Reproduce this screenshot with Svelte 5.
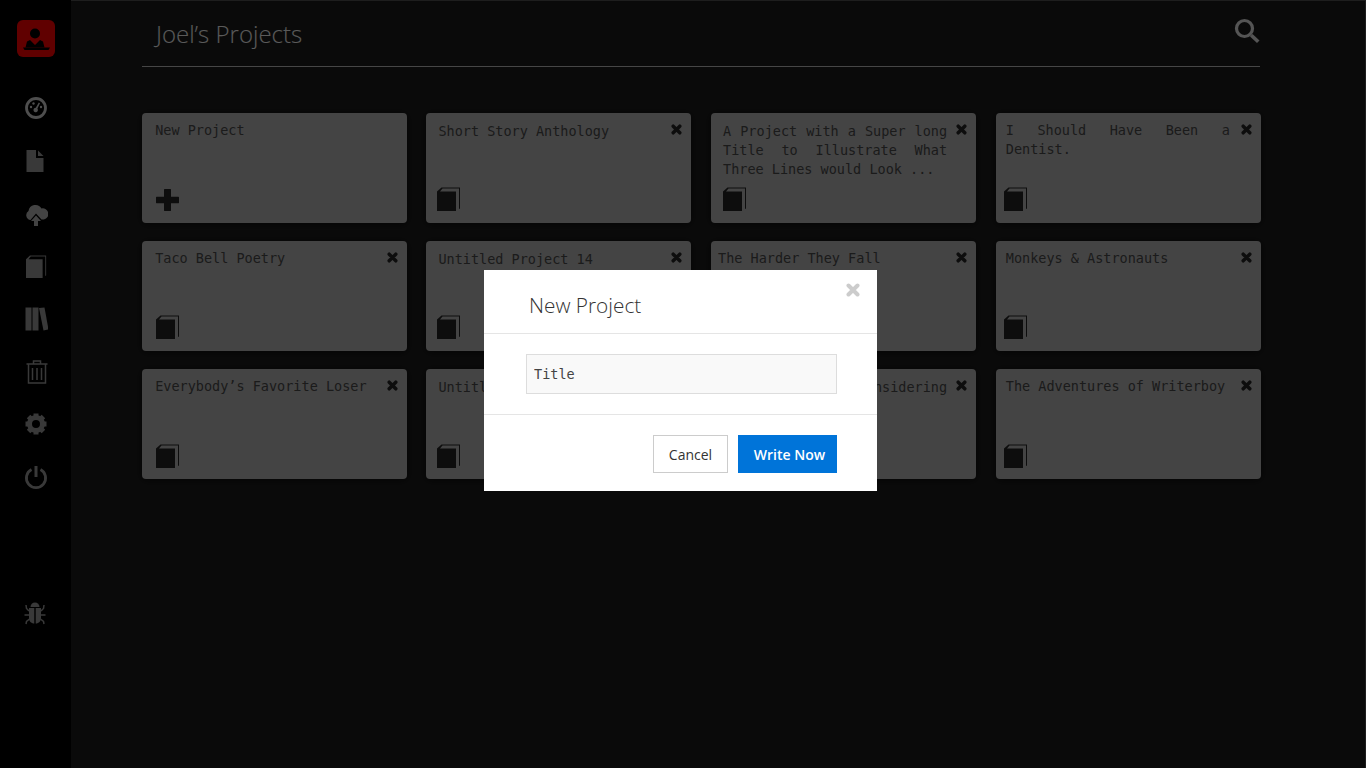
<script>
	const projects = [
		{ title: "New Project", isNew: true },
		{ title: "Short Story Anthology" },
		{ title: "A Project with a Super long Title to Illustrate What Three Lines would Look ..." },
		{ title: "I Should Have Been a Dentist." },
		{ title: "Taco Bell Poetry" },
		{ title: "Untitled Project 14" },
		{ title: "The Harder They Fall", nudge: "shifted" },
		{ title: "Monkeys & Astronauts" },
		{ title: "Everybody’s Favorite Loser" },
		{ title: "Untitled Project 15" },
		{ title: "The Book I Keep Considering", nudge: "inset" },
		{ title: "The Adventures of Writerboy" }
	];
</script>

{#snippet book()}
	<path d="M4.500 0.500H23V21.500L22 22V1.500H5.500L3 4.500H19V24H0V4.500Z" />
{/snippet}

<div class="app">
	<nav class="sidebar">
		<div class="logo">
			<svg width="30" height="28" viewBox="0 0 30 28">
				<circle cx="14" cy="8.500" r="5" />
				<path d="M9 15L14 20L19 15L22 16.500L23.500 22.500H4.500L6 16.500Z" />
				<path d="M2 22.500H29L27.500 25H3.500Z" />
			</svg>
		</div>
		<ul class="nav-icons">
			<li class="bright">
				<svg width="24" height="24" viewBox="0 0 24 24">
					<circle class="line" cx="12" cy="12" r="9.500" stroke-width="2.800" />
					<circle cx="7" cy="11" r="1.200" /><circle cx="9.500" cy="7.500" r="1.200" />
					<circle cx="17" cy="11" r="1.200" /><path d="M14.800 6.500L16 7.200L13.400 12.600A2.200 2.200 0 1 1 11.800 11.800Z" />
				</svg>
			</li>
			<li>
				<svg width="24" height="24" viewBox="0 0 24 24">
					<path d="M2.500 1H12V9H19.500V23H2.500Z" /><path d="M14 1.500L19.500 7H14Z" />
				</svg>
			</li>
			<li class="mid">
				<svg width="24" height="24" viewBox="0 0 24 24">
					<path d="M6 18A5 5 0 0 1 4.500 9A7 7 0 0 1 17.500 6.500A5.600 5.600 0 0 1 20 17.500H17.500L12 11.500L6.500 18Z" />
					<path d="M12 13.500L17 19H14V24.500H10V19H7Z" />
				</svg>
			</li>
			<li>
				<svg class="nav-book" width="21" height="23" viewBox="0 0 24 24" preserveAspectRatio="none">{@render book()}</svg>
			</li>
			<li>
				<svg width="24" height="24" viewBox="0 0 24 24">
					<rect x="1.500" y="0.500" width="6" height="23" /><rect x="8.500" y="0.500" width="6" height="23" />
					<path d="M15 1L20.500 0.500L24.500 22.500L19.500 23.500Z" />
				</svg>
			</li>
			<li>
				<svg width="24" height="24" viewBox="-1 0 24 24">
					<path class="line" stroke-width="1.500" d="M8.500 3.500V1H15.500V3.500M1.500 4H22.500M3.500 4V23H20.500V4M7.500 8V20M12 8V20M16.500 8V20" />
				</svg>
			</li>
			<li>
				<svg width="24" height="24" viewBox="0 0 24 24">
					<circle class="line" cx="12" cy="12" r="6.500" stroke-width="5" />
					{#each [0, 45, 90, 135, 180, 225, 270, 315] as angle}
						<rect x="9.500" y="1.500" width="5" height="5" transform="rotate({angle} 12 12)" />
					{/each}
				</svg>
			</li>
			<li>
				<svg width="24" height="24" viewBox="0 0 24 24">
					<path class="line" stroke-width="2.800" d="M7.500 4.500A9.600 9.600 0 1 0 16.500 4.500" />
					<rect x="10.500" y="1" width="3" height="11" />
				</svg>
			</li>
		</ul>
		<div class="bug">
			<svg width="24" height="24" viewBox="1 0 24 24">
				<path d="M7.500 6A4.500 4.500 0 0 1 16.500 6Z" />
				<path d="M6 7H11.300V22.500C8 22.500 6 20 6 17ZM12.700 7H18V17C18 20 16 22.500 12.700 22.500Z" />
				<path class="line" stroke-width="1.500" d="M6 10L3.500 7.500L3 4M18 10L20.500 7.500L21 4M6 14H1.500M18 14H22.500M6.500 18L3.500 20.500L3 23M17.500 18L20.500 20.500L21 23" />
			</svg>
		</div>
	</nav>

	<main class="content">
		<header class="page-head">
			<h1>Joel’s Projects</h1>
			<svg class="search" width="26" height="26" viewBox="0 0 26 26">
				<circle class="line" cx="10.500" cy="10.500" r="8" stroke-width="3.200" />
				<path d="M16 18.500L18.500 16L25.500 22.500L23 25Z" />
			</svg>
		</header>

		<div class="grid">
			{#each projects as project}
				<article class="card {project.nudge ?? ''}">
					{#if !project.isNew}
						<svg class="remove" width="11" height="11" viewBox="0 0 11 11">
							<path d="M2.200 2.200L8.800 8.800M8.800 2.200L2.200 8.800" />
						</svg>
					{/if}
					<p>{project.title}</p>
					{#if project.isNew}
						<svg class="plus" width="23" height="22" viewBox="0 0 23 23" preserveAspectRatio="none">
							<path d="M8 0.500Q8 0 8.500 0H14.500Q15 0 15 0.500V8H22.500Q23 8 23 8.500V14.500Q23 15 22.500 15H15V22.500Q15 23 14.500 23H8.500Q8 23 8 22.500V15H0.500Q0 15 0 14.500V8.500Q0 8 0.500 8H8Z" />
						</svg>
					{:else}
						<svg class="doc" width="24" height="24" viewBox="0 0 24 24">{@render book()}</svg>
					{/if}
				</article>
			{/each}
		</div>
	</main>
</div>

<div class="overlay">
	<div class="modal">
		<svg class="modal-close" width="14" height="14" viewBox="0 0 14 14">
			<path d="M2.500 2.500L11.500 11.500M11.500 2.500L2.500 11.500" />
		</svg>
		<h2>New Project</h2>
		<div class="modal-body">
			<input type="text" value="Title" />
		</div>
		<div class="modal-foot">
			<button class="cancel">Cancel</button>
			<button class="write">Write Now</button>
		</div>
	</div>
</div>

<style>
	:global(body) {
		background: #000;
	}
	.app {
		display: flex;
		height: 768px;
		overflow: hidden;
		background: #1b1b1b;
	}
	.sidebar {
		flex: 0 0 71px;
		background: #000;
		display: flex;
		flex-direction: column;
		align-items: center;
		padding-top: 20px;
		box-sizing: border-box;
		color: #8e8e8e;
	}
	.sidebar svg {
		fill: currentColor;
		display: block;
	}
	.line {
		fill: none !important;
		stroke: currentColor;
	}
	.logo {
		width: 38px;
		height: 37px;
		border-radius: 6px;
		background: #f00000;
		display: flex;
		align-items: center;
		justify-content: center;
	}
	.logo svg {
		color: #000;
	}
	.nav-icons {
		list-style: none;
		margin: 39px 0 0;
		padding: 0;
		display: flex;
		flex-direction: column;
		gap: 28.920px;
	}
	.nav-icons .bright {
		color: #c4c4c4;
	}
	.nav-icons .mid {
		color: #a8a8a8;
	}
	.nav-book {
		margin-left: 2.500px;
	}
	.bug {
		margin-top: 111.500px;
	}
	.content {
		flex: 1;
		min-width: 0;
		border-top: 1px solid #4b4b4b;
		border-right: 1px solid #4b4b4b;
		padding: 0 105px 0 71px;
	}
	.page-head {
		height: 65px;
		display: flex;
		align-items: center;
		justify-content: space-between;
		border-bottom: 1px solid #b0b0b0;
		padding: 0 0 0 14px;
	}
	.page-head h1 {
		margin: 0;
		font: 300 24px "Open Sans", sans-serif;
		color: #e0e0e0;
	}
	.search {
		fill: #d4d4d4;
		color: #d4d4d4;
		margin-bottom: 5px;
	}
	.grid {
		display: grid;
		grid-template-columns: repeat(4, 265px);
		column-gap: 19.700px;
		row-gap: 18px;
		margin: 46px 0 0 -0.300px;
		width: 1120px;
	}
	.card {
		position: relative;
		height: 110px;
		box-sizing: border-box;
		background: #aaa;
		border-radius: 4px;
		box-shadow: 0 1px 8px rgba(0, 0, 0, 0.6);
		padding: 9px 0 0 12px;
	}
	.card p {
		margin: 0;
		width: 224px;
		font: 13.500px/19px "DejaVu Sans Mono", monospace;
		color: #444;
		text-align: justify;
	}
	.card:nth-child(4n + 1) {
		padding-left: 13.500px;
		padding-top: 8px;
	}
	.card:nth-child(4n) {
		padding-left: 10px;
		padding-top: 8px;
	}
	.card.shifted {
		padding-left: 7px;
		padding-top: 8px;
	}
	.card.inset {
		padding-left: 16.500px;
	}
	.card svg {
		fill: #222;
	}
	.remove {
		position: absolute;
		top: 11px;
		right: 9px;
	}
	.remove path {
		fill: none;
		stroke: #222;
		stroke-width: 3.500;
		stroke-linecap: round;
	}
	.plus,
	.doc {
		position: absolute;
		bottom: 12px;
		left: 14px;
	}
	.card:nth-child(n + 9) .doc {
		bottom: 11px;
	}
	.card:nth-child(4n + 2) .doc {
		left: 11px;
	}
	.card:nth-child(4n + 3) .doc {
		left: 12px;
	}
	.card:nth-child(4n) .doc {
		left: 8px;
	}
	.overlay {
		position: fixed;
		inset: 0;
		background: rgba(0, 0, 0, 0.6);
		display: flex;
		justify-content: center;
		align-items: flex-start;
		padding: 270px 5px 0 0;
		box-sizing: border-box;
	}
	.modal {
		position: relative;
		width: 393px;
		height: 221px;
		background: #fff;
	}
	.modal h2 {
		margin: 0;
		height: 64px;
		box-sizing: border-box;
		padding: 20px 0 0 45px;
		border-bottom: 1px solid #e5e5e5;
		font: 300 20.800px/30px "Open Sans", sans-serif;
		color: #333;
	}
	.modal-close {
		position: absolute;
		top: 13px;
		right: 17px;
	}
	.modal-close path {
		fill: none;
		stroke: #ccc;
		stroke-width: 4;
		stroke-linecap: round;
	}
	.modal-body {
		height: 81px;
		box-sizing: border-box;
		padding: 20px 0 0 42px;
		border-bottom: 1px solid #e5e5e5;
	}
	.modal-body input {
		width: 311px;
		height: 40px;
		box-sizing: border-box;
		border: 1px solid #ddd;
		background: #f9f9f9;
		padding: 0 7px;
		font: 13.500px "DejaVu Sans Mono", monospace;
		color: #444;
		outline: none;
	}
	.modal-foot {
		display: flex;
		justify-content: flex-end;
		gap: 10px;
		padding: 20px 40px 0 0;
	}
	.modal-foot button {
		height: 38px;
		box-sizing: border-box;
		font: 14px "Open Sans", sans-serif;
		border-radius: 0;
	}
	.cancel {
		width: 75px;
		border: 1px solid #ccc;
		background: #fff;
		color: #333;
	}
	.write {
		width: 99px;
		border: 0;
		background: #0074d9;
		color: #fff;
		padding: 0 0 0 4px;
		font-weight: 600 !important;
	}
</style>
